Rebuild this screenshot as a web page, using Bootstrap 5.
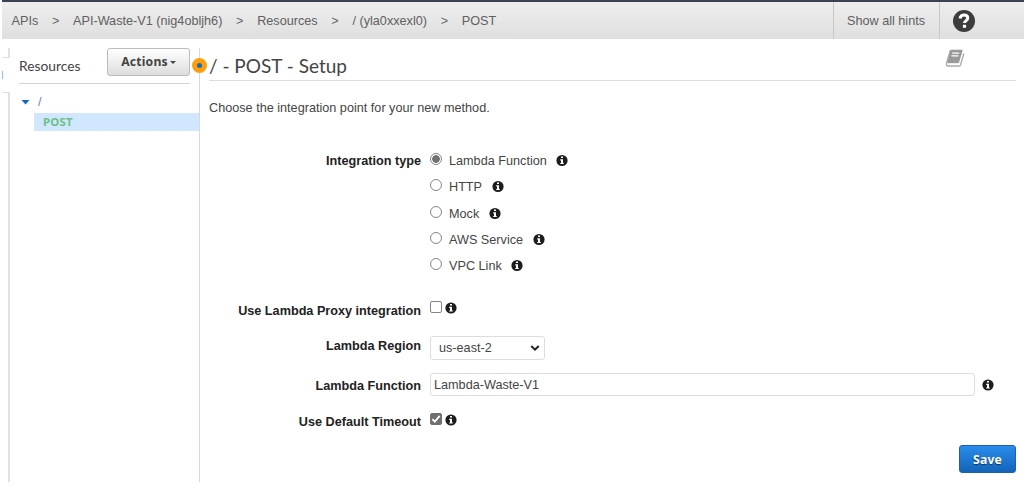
<!DOCTYPE html>
<html lang="en">
<head>
<meta charset="utf-8">
<meta name="viewport" content="width=device-width, initial-scale=1">
<title>/ - POST - Setup</title>
<link href="https://cdn.jsdelivr.net/npm/bootstrap@5.3.0/dist/css/bootstrap.min.css" rel="stylesheet">
<style>
body{font-family:"Liberation Sans",Arial,sans-serif;font-size:12.67px;line-height:16px;color:#444;background:#fff;height:496px;overflow:hidden}
.topbar{margin:0 3px 0 2px;height:39px;border-top:2px solid #3b4454;background:linear-gradient(#eee,#dfdfdf);color:#606060}
.topbar .breadcrumb{--bs-breadcrumb-divider:">";--bs-breadcrumb-item-padding-x:13.7px;--bs-breadcrumb-divider-color:#666;padding-left:9.5px;font-size:12.67px}
.topbar .breadcrumb-item.active{color:#606060}
.hints{border-left:1px solid #c8c8c8;border-right:1px solid #c8c8c8;width:107px;padding-right:1px}
.helpbox{width:84px;padding-left:13px}
.shell{height:434px;margin-top:9px}
.edge{width:10px;padding-left:2px}
.edge-top{height:10px;border-right:2px solid #e2e2e2;border-bottom:1px solid #ddd}
.edge-mark{height:8px;width:1px;margin-top:13px;background:#8cc1ee}
.edge-body{margin-top:13px;border-top:1px solid #ddd;border-right:2px solid #e2e2e2}
.side{width:190px;border-right:1px solid #d8d8d8}
.side-head{height:36px;margin:0 9px 0 9px;border-bottom:1px solid #d4d4d4}
.side-title{font:13.8px/20px Lato,sans-serif;padding-top:8px;color:#444}
.btn-actions{width:83px;height:28px;padding:0;font:bold 12.2px/26px "Noto Sans",sans-serif;letter-spacing:.2px;color:#444;background:linear-gradient(#fff,#ddd);border:1px solid #bbb;border-radius:3px}
.btn-actions::after{vertical-align:2px;margin-left:2px;border-top-width:3.5px;border-left-width:3.5px;border-right-width:3.5px}
.tree-root{height:29px;padding:10px 0 0 11px;color:#5d87c6}
.tree-leaf{height:18px;margin-left:24px;padding-left:9px;background:#d0e7ff;color:#6cc083;font:bold 11.4px/18px "Noto Sans",sans-serif;letter-spacing:.2px}
.pane{padding:0 11px 0 9px}
.pane-head{height:33px;border-bottom:1px solid #ddd}
.pane-head h1{font:19px/28px Lato,sans-serif;color:#444;padding-top:4px;margin:0;white-space:nowrap}
.splitter{position:absolute;left:-8px;top:10px;width:15px;height:15px;border-radius:50%;border:5px solid #ff9d0c;background:#146eb4;z-index:2}
.book{margin:1px 51px 0 0}
.fl{width:212px;text-align:right;font-weight:bold;color:#222;flex:none}
.fc{margin-left:9px}
input.opt{appearance:none;width:12px;height:12px;border:1px solid #858585;background:#fff;margin:0;flex:none}
input.opt[type=radio]{border-radius:50%}
input.opt[type=radio]:checked{background:radial-gradient(circle,#707070 0 3.5px,#fff 4.1px)}
input.opt[type=checkbox]{border-radius:2px}
input.opt[type=checkbox]:checked{border-color:#707070;background:#707070 url("data:image/svg+xml,%3Csvg xmlns='http://www.w3.org/2000/svg' viewBox='0 0 10 10'%3E%3Cpath d='M1.300 5.200 3.800 7.700 8.700 1.800' fill='none' stroke='%23fff' stroke-width='1.8'/%3E%3C/svg%3E") center/10px 10px no-repeat}
.choices>div{height:26.25px}
.choices label{margin:0 9.7px 0 7px}
.tip{margin-left:3px}
.region{width:115px;height:24px;font-size:12.67px;line-height:16px;padding:0 8px;border:1px solid #ddd;border-radius:3px;color:#444;background-position:right 4px center;background-size:10px 10px;background-image:url("data:image/svg+xml,%3Csvg xmlns='http://www.w3.org/2000/svg' viewBox='0 0 10 10'%3E%3Cpath d='M1.3 3 5 6.7 8.7 3' fill='none' stroke='%23222' stroke-width='2'/%3E%3C/svg%3E")}
.fn{width:545px;height:23px;font-size:12.67px;line-height:16px;padding:0 3px;border:1px solid #ddd;border-radius:3px;color:#444}
.btn-save{width:57px;height:28px;padding:0;font:bold 12.2px/25px "Noto Sans",sans-serif;letter-spacing:.2px;color:#fff;background:linear-gradient(#2a8cec,#1264b8);border:1px solid #1b62ac;border-radius:3px;text-shadow:0 1px 1px #0008}
svg{display:block;flex:none}
</style>
</head>
<body>
<svg width="0" height="0" class="position-absolute"><symbol id="info" viewBox="0 0 12 12"><circle cx="6" cy="6" r="5.6" fill="#1d1d1d"/><path d="M5 2h2v1.6H5zM4.2 4.7H7v3.7h.8v1.2H4.2V8.400H5V5.900h-.8z" fill="#fff"/></symbol></svg>
<header class="topbar d-flex align-items-stretch">
  <ol class="breadcrumb mb-0 align-items-center flex-grow-1">
    <li class="breadcrumb-item">APIs</li><li class="breadcrumb-item">API-Waste-V1 (nig4obljh6)</li><li class="breadcrumb-item">Resources</li><li class="breadcrumb-item">/ (yla0xxexl0)</li><li class="breadcrumb-item active">POST</li>
  </ol>
  <div class="hints d-flex align-items-center justify-content-center">Show all hints</div>
  <div class="helpbox d-flex align-items-center"><svg width="22" height="22" viewBox="0 0 22 22"><circle cx="11" cy="11" r="11" fill="#3c3c3c"/><path d="M7 8.500C7.400 5.900 9 5 11.100 5c2.200 0 3.700 1.300 3.700 3.100 0 2.500-3.300 2.500-3.300 4.900" fill="none" stroke="#fff" stroke-width="3"/><path d="M9.900 14.800h3.200v3H9.900z" fill="#fff"/></svg></div>
</header>
<div class="shell d-flex">
  <div class="edge d-flex flex-column"><div class="edge-top"></div><div class="edge-mark"></div><div class="edge-body flex-grow-1"></div></div>
  <aside class="side">
    <div class="side-head d-flex justify-content-between"><span class="side-title">Resources</span><button class="btn btn-actions dropdown-toggle">Actions</button></div>
    <div class="tree-root d-flex"><svg width="9" height="16" viewBox="0 0 9 16"><path d="M.5 6h8L4.500 10.500z" fill="#1366c0"/></svg><span class="ms-2">/</span></div>
    <div class="tree-leaf">POST</div>
  </aside>
  <main class="pane flex-grow-1 position-relative">
    <span class="splitter"></span>
    <div class="pane-head d-flex justify-content-between"><h1>/ - POST - Setup</h1>
      <svg class="book" width="20" height="19" viewBox="0 0 20 19"><path d="M5.500 1 1.700 13.500Q.8 17 3.200 17H14q1.200 0 1.600-1.200L18.800 4.500" fill="none" stroke="#aaa" stroke-width="1.300"/><path d="M6.500.7h10q1.300 0 1 1.200L14.200 13q-.4 1.200-1.600 1.200H2.200L5.200 2q.3-1.300 1.300-1.300z" fill="#999"/><path d="M7.200 4.200h7M6.400 6.900h7" stroke="#fff" stroke-width="1.200"/><path d="M2.500 15.200h11" stroke="#fff" stroke-width="1"/></svg>
    </div>
    <p class="mb-0" style="margin-top:19px">Choose the integration point for your new method.</p>
    <form>
      <div class="d-flex" style="margin-top:37px"><div class="fl">Integration type</div>
        <div class="fc choices">
          <div class="d-flex"><input class="opt" type="radio" name="t" id="t1" checked><label for="t1">Lambda Function</label><svg width="12" height="16"><use href="#info" width="12" height="12" y="1.500"/></svg></div>
          <div class="d-flex"><input class="opt" type="radio" name="t" id="t2"><label for="t2">HTTP</label><svg width="12" height="16"><use href="#info" width="12" height="12" y="1.500"/></svg></div>
          <div class="d-flex"><input class="opt" type="radio" name="t" id="t3"><label for="t3">Mock</label><svg width="12" height="16"><use href="#info" width="12" height="12" y="1.500"/></svg></div>
          <div class="d-flex"><input class="opt" type="radio" name="t" id="t4"><label for="t4">AWS Service</label><svg width="12" height="16"><use href="#info" width="12" height="12" y="1.500"/></svg></div>
          <div class="d-flex"><input class="opt" type="radio" name="t" id="t5"><label for="t5">VPC Link</label><svg width="12" height="16"><use href="#info" width="12" height="12" y="1.500"/></svg></div>
        </div></div>
      <div class="d-flex" style="margin-top:17px;height:35px"><div class="fl" style="padding-top:2px">Use Lambda Proxy integration</div>
        <div class="fc d-flex"><input class="opt" type="checkbox"><svg class="tip" width="12" height="16"><use href="#info" width="12" height="12" y="1"/></svg></div></div>
      <div class="d-flex" style="height:37px"><div class="fl" style="padding-top:2px">Lambda Region</div><div class="fc"><select class="form-select region"><option>us-east-2</option></select></div></div>
      <div class="d-flex" style="height:40px"><div class="fl" style="padding-top:5px">Lambda Function</div><div class="fc d-flex"><input class="form-control fn" value="Lambda-Waste-V1"><svg width="12" height="18" style="margin-left:7px"><use href="#info" width="12" height="12" y="6"/></svg></div></div>
      <div class="d-flex" style="height:32px"><div class="fl" style="padding-top:1px">Use Default Timeout</div><div class="fc d-flex"><input class="opt" type="checkbox" checked><svg class="tip" width="12" height="16"><use href="#info" width="12" height="12" y="1"/></svg></div></div>
      <div class="d-flex justify-content-end"><button type="button" class="btn btn-save">Save</button></div>
    </form>
  </main>
</div>
</body>
</html>
